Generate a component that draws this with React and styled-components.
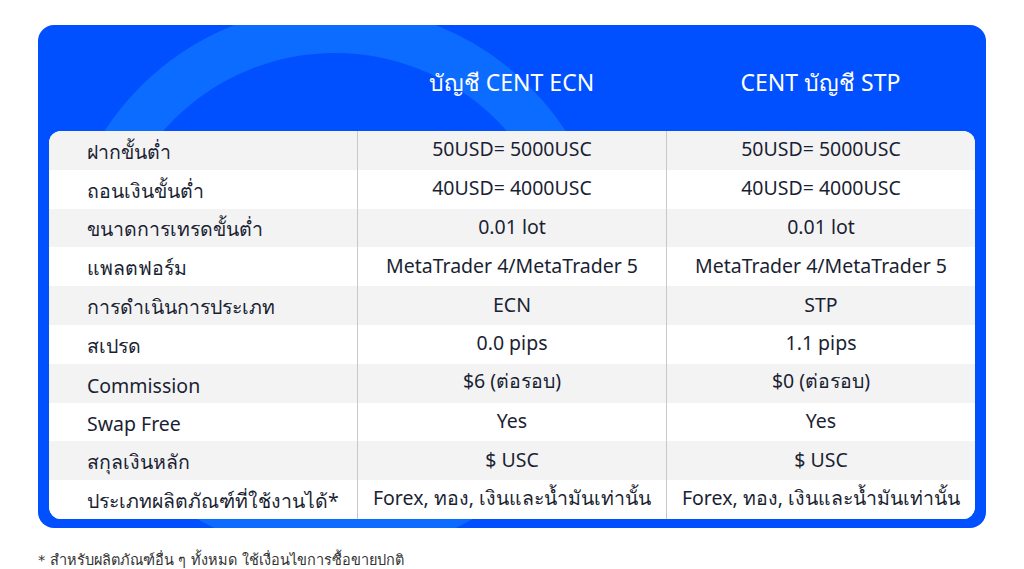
import React from "react";
import styled, { createGlobalStyle } from "styled-components";

const Global = createGlobalStyle`
  html, body { margin: 0; padding: 0; background: #ffffff; }
  body { font-family: "Noto Sans", "Noto Sans CJK SC", sans-serif; }
  * { box-sizing: border-box; }
`;

const Page = styled.div`
  width: 1024px;
  height: 569px;
  padding: 25px 38px 0 38px;
  display: flex;
  flex-direction: column;
  overflow: hidden;
`;

const Card = styled.div`
  position: relative;
  flex-shrink: 0;
  overflow: hidden;
  background: #0050ff;
  border-radius: 16px;
  padding: 0 11px 9px 11px;
  display: flex;
  flex-direction: column;
  &::before {
    content: "";
    position: absolute;
    left: 22px;
    top: -19px;
    width: 456px;
    height: 456px;
    border-radius: 50%;
    border: 47px solid #0b6cff;
    background: transparent;
    pointer-events: none;
  }
`;

const HeaderRow = styled.div`
  position: relative;
  display: grid;
  grid-template-columns: 308px 309px 309px;
  height: 106px;
  align-items: center;
  padding-top: 10px;
`;

const HeaderCell = styled.div`
  color: #ffffff;
  font-size: 23px;
  text-align: center;
  font-weight: 400;
`;

const Table = styled.div`
  position: relative;
  background: #ffffff;
  border-radius: 12px;
  overflow: hidden;
  display: flex;
  flex-direction: column;
`;

const Row = styled.div`
  display: grid;
  grid-template-columns: 308px 309px 309px;
  height: 38.8px;
  flex-shrink: 0;
  background: ${(p) => (p.$shaded ? "#f3f3f3" : "#ffffff")};
`;

const Cell = styled.div`
  display: flex;
  align-items: center;
  justify-content: ${(p) => (p.$label ? "flex-start" : "center")};
  padding-left: ${(p) => (p.$label ? "38px" : "0")};
  padding-bottom: ${(p) => (p.$label ? "0" : "3px")};
  padding-top: ${(p) => (p.$label ? "4px" : "0")};
  border-left: ${(p) => (p.$label ? "none" : "1px solid #c8c8c8")};
  font-size: 19.5px;
  color: #1b1f33;
  white-space: nowrap;
`;

const Note = styled.div`
  margin-top: 20px;
  font-family: "DejaVu Sans", "Liberation Sans", sans-serif;
  font-size: 14.5px;
  color: #333333;
`;

const rows = [
  ["ฝากขั้นต่ำ", "50USD= 5000USC", "50USD= 5000USC"],
  ["ถอนเงินขั้นต่ำ", "40USD= 4000USC", "40USD= 4000USC"],
  ["ขนาดการเทรดขั้นต่ำ", "0.01 lot", "0.01 lot"],
  ["แพลตฟอร์ม", "MetaTrader 4/MetaTrader 5", "MetaTrader 4/MetaTrader 5"],
  ["การดำเนินการประเภท", "ECN", "STP"],
  ["สเปรด", "0.0 pips", "1.1 pips"],
  ["Commission", "$6 (ต่อรอบ)", "$0 (ต่อรอบ)"],
  ["Swap Free", "Yes", "Yes"],
  ["สกุลเงินหลัก", "$ USC", "$ USC"],
  ["ประเภทผลิตภัณฑ์ที่ใช้งานได้*", "Forex, ทอง, เงินและน้ำมันเท่านั้น", "Forex, ทอง, เงินและน้ำมันเท่านั้น"],
];

export default function App() {
  return (
    <Page>
      <Global />
      <Card>
        <HeaderRow>
          <div />
          <HeaderCell>บัญชี CENT ECN</HeaderCell>
          <HeaderCell>CENT บัญชี STP</HeaderCell>
        </HeaderRow>
        <Table>
          {rows.map((r, i) => (
            <Row key={i} $shaded={i % 2 === 0}>
              <Cell $label>{r[0]}</Cell>
              <Cell>{r[1]}</Cell>
              <Cell>{r[2]}</Cell>
            </Row>
          ))}
        </Table>
      </Card>
      <Note>* สำหรับผลิตภัณฑ์อื่น ๆ ทั้งหมด ใช้เงื่อนไขการซื้อขายปกติ</Note>
    </Page>
  );
}
